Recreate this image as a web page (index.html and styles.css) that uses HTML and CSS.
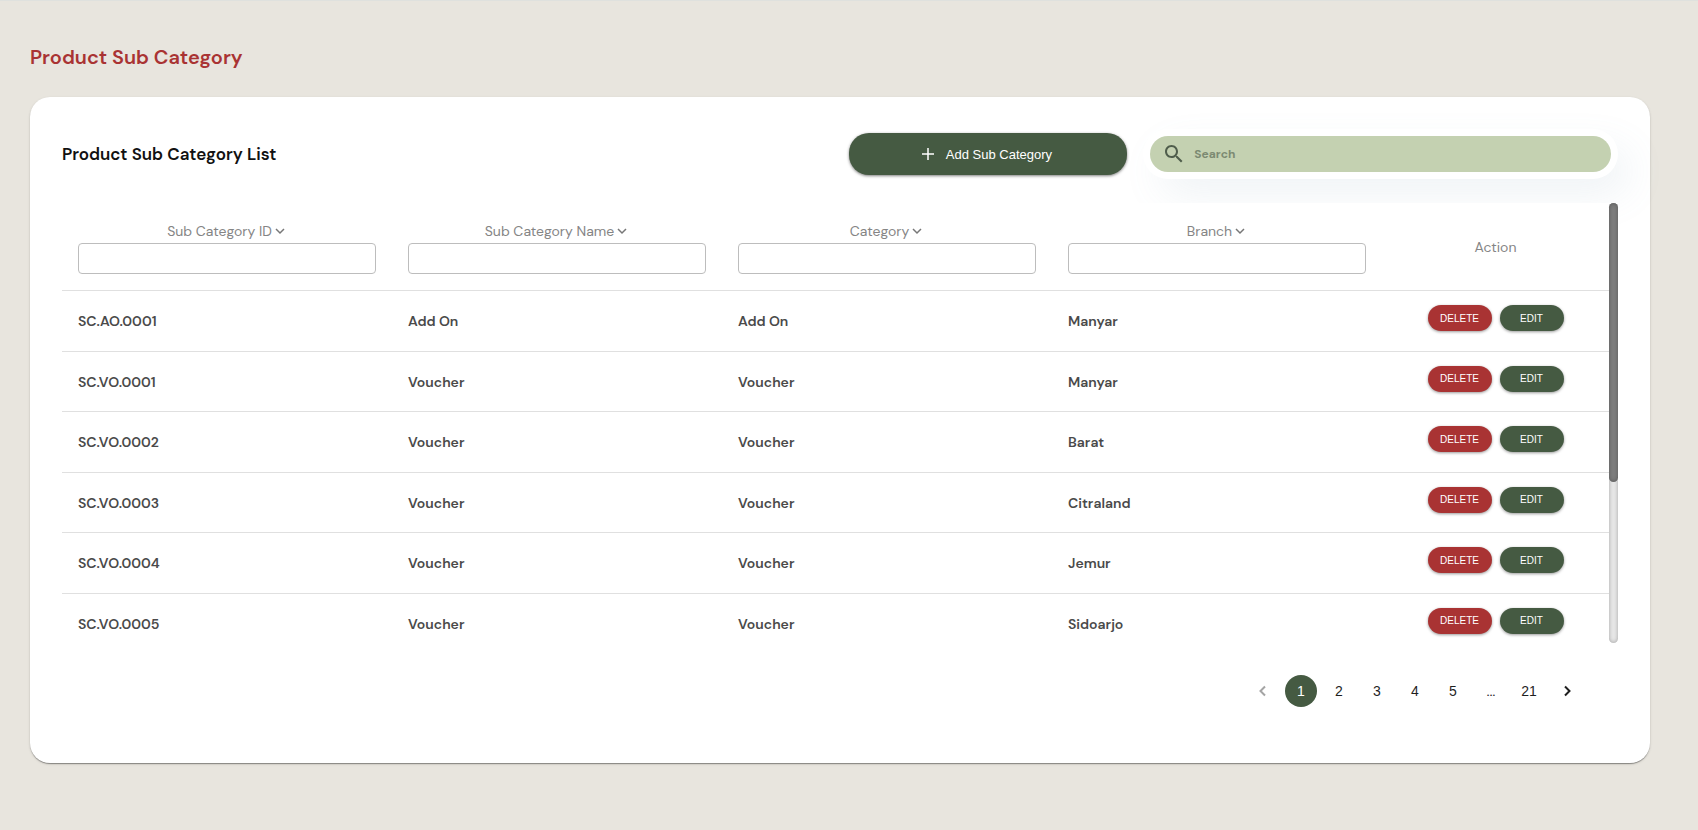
FILE: index.html
```html
<!DOCTYPE html>
<html lang="en">
<head>
    <meta charset="UTF-8">
    <meta name="viewport" content="width=device-width, initial-scale=1.0">
    <title>Product Sub Category</title>
    <link rel="stylesheet" href="styles.css">
</head>
<body>
    <main class="page">
        <h1 class="page-title">Product Sub Category</h1>

        <section class="card">
            <div class="card-header">
                <h2 class="card-title">Product Sub Category List</h2>
                <button type="button" class="btn-add">
                    <svg class="icon-plus" viewBox="0 0 16 16" aria-hidden="true"><path d="M8 2v12M2 8h12" /></svg>
                    Add Sub Category
                </button>
                <label class="search">
                    <svg class="icon-search" viewBox="0 0 24 24" aria-hidden="true"><path d="M15.5 14h-.79l-.28-.27C15.41 12.59 16 11.11 16 9.5 16 5.91 13.09 3 9.5 3S3 5.91 3 9.5 5.91 16 9.5 16c1.61 0 3.09-.59 4.23-1.57l.27.28v.79l5 4.99L20.49 19l-4.99-5zm-6 0C7.01 14 5 11.99 5 9.5S7.01 5 9.5 5 14 7.01 14 9.5 11.99 14 9.5 14z" /></svg>
                    <input type="search" class="search-input" placeholder="Search" aria-label="Search">
                </label>
            </div>

            <div class="table-area">
                <div class="table-scroll">
                    <table class="table">
                        <thead>
                            <tr>
                                <th>
                                    <label for="filterId">Sub Category ID<svg class="icon-sort" viewBox="0 0 14 10" aria-hidden="true"><path d="M3 3l4 4 4-4" /></svg></label>
                                    <input type="text" id="filterId" class="filter">
                                </th>
                                <th>
                                    <label for="filterName">Sub Category Name<svg class="icon-sort" viewBox="0 0 14 10" aria-hidden="true"><path d="M3 3l4 4 4-4" /></svg></label>
                                    <input type="text" id="filterName" class="filter">
                                </th>
                                <th>
                                    <label for="filterCategory">Category<svg class="icon-sort" viewBox="0 0 14 10" aria-hidden="true"><path d="M3 3l4 4 4-4" /></svg></label>
                                    <input type="text" id="filterCategory" class="filter">
                                </th>
                                <th>
                                    <label for="filterBranch">Branch<svg class="icon-sort" viewBox="0 0 14 10" aria-hidden="true"><path d="M3 3l4 4 4-4" /></svg></label>
                                    <input type="text" id="filterBranch" class="filter">
                                </th>
                                <th class="col-action">Action</th>
                            </tr>
                        </thead>
                        <tbody>
                            <tr>
                                <td>SC.AO.0001</td>
                                <td>Add On</td>
                                <td>Add On</td>
                                <td>Manyar</td>
                                <td><div class="actions"><button type="button" class="btn btn-delete">DELETE</button><button type="button" class="btn btn-edit">EDIT</button></div></td>
                            </tr>
                            <tr>
                                <td>SC.VO.0001</td>
                                <td>Voucher</td>
                                <td>Voucher</td>
                                <td>Manyar</td>
                                <td><div class="actions"><button type="button" class="btn btn-delete">DELETE</button><button type="button" class="btn btn-edit">EDIT</button></div></td>
                            </tr>
                            <tr>
                                <td>SC.VO.0002</td>
                                <td>Voucher</td>
                                <td>Voucher</td>
                                <td>Barat</td>
                                <td><div class="actions"><button type="button" class="btn btn-delete">DELETE</button><button type="button" class="btn btn-edit">EDIT</button></div></td>
                            </tr>
                            <tr>
                                <td>SC.VO.0003</td>
                                <td>Voucher</td>
                                <td>Voucher</td>
                                <td>Citraland</td>
                                <td><div class="actions"><button type="button" class="btn btn-delete">DELETE</button><button type="button" class="btn btn-edit">EDIT</button></div></td>
                            </tr>
                            <tr>
                                <td>SC.VO.0004</td>
                                <td>Voucher</td>
                                <td>Voucher</td>
                                <td>Jemur</td>
                                <td><div class="actions"><button type="button" class="btn btn-delete">DELETE</button><button type="button" class="btn btn-edit">EDIT</button></div></td>
                            </tr>
                            <tr>
                                <td>SC.VO.0005</td>
                                <td>Voucher</td>
                                <td>Voucher</td>
                                <td>Sidoarjo</td>
                                <td><div class="actions"><button type="button" class="btn btn-delete">DELETE</button><button type="button" class="btn btn-edit">EDIT</button></div></td>
                            </tr>
                        </tbody>
                    </table>
                </div>
                <div class="scrollbar"><div class="scrollbar-thumb"></div></div>
            </div>

            <nav class="pagination" aria-label="Pagination">
                <button type="button" class="page-btn" aria-label="Previous" disabled><svg class="icon-arrow" viewBox="0 0 18 18" aria-hidden="true"><path d="M11 4.500L6.500 9l4.500 4.500" /></svg></button>
                <button type="button" class="page-btn active">1</button>
                <button type="button" class="page-btn">2</button>
                <button type="button" class="page-btn">3</button>
                <button type="button" class="page-btn">4</button>
                <button type="button" class="page-btn">5</button>
                <span class="page-btn page-dots">…</span>
                <button type="button" class="page-btn">21</button>
                <button type="button" class="page-btn" aria-label="Next"><svg class="icon-arrow" viewBox="0 0 18 18" aria-hidden="true"><path d="M7 4.500L11.500 9 7 13.500" /></svg></button>
            </nav>
        </section>
    </main>
</body>
</html>
```
FILE: styles.css
```css
/* General */
* {
    box-sizing: border-box;
}

body {
    margin: 0;
    min-height: 100vh;
    background-color: #e8e5de;
    border-top: 1px solid #dfe1de;
    font-family: "DM Sans", Inter, sans-serif;
    color: #111;
}

.page {
    padding: 40px 48px 40px 30px;
}

.page-title {
    margin: 0 0 24px;
    font-size: 20px;
    line-height: 32px;
    font-weight: 600;
    color: #a93333;
}

/* Card */
.card {
    padding: 36px 32px 56px;
    background-color: #fff;
    border-radius: 20px;
    box-shadow: 0 2px 1px -1px rgba(0, 0, 0, 0.2), 0 1px 1px rgba(0, 0, 0, 0.2), 0 1px 3px rgba(0, 0, 0, 0.12);
}

.card-header {
    display: flex;
    align-items: center;
    padding-right: 7px;
    margin-bottom: 28px;
}

.card-title {
    flex: 1;
    margin: 0;
    font-size: 17px;
    font-weight: 600;
}

.btn-add {
    display: flex;
    align-items: center;
    justify-content: center;
    gap: 10px;
    width: 18%;
    height: 42px;
    padding: 0 8px 0 4px;
    margin-right: 23px;
    border: none;
    border-radius: 20px;
    background-color: #455a42;
    box-shadow: 0 1px 3px rgba(0, 0, 0, 0.5);
    color: #fff;
    font-family: "Liberation Sans", Arial, sans-serif;
    font-size: 13px;
    cursor: pointer;
}

.icon-plus {
    width: 16px;
    height: 16px;
    stroke: #fff;
    stroke-width: 1.5;
}

/* Search */
.search {
    display: flex;
    align-items: center;
    gap: 6px;
    width: calc(30% - 4px);
    height: 36px;
    padding: 0 12px;
    border-radius: 18px;
    background-color: #c4d1b1;
    box-shadow: 0 0 0 7px #fff, 14px 17px 40px 4px rgba(112, 144, 176, 0.12);
}

.icon-search {
    width: 24px;
    height: 24px;
    fill: #4f5d4b;
}

.search-input {
    flex: 1;
    border: none;
    outline: none;
    background: none;
    font-family: inherit;
    font-size: 12px;
    font-weight: 700;
}

.search-input::placeholder {
    color: #7c8a72;
}

/* Table */
.table-area {
    position: relative;
    display: flex;
    height: 440px;
    background-color: #fff;
}

.table-scroll {
    flex: 1;
    overflow: hidden;
}

.table {
    width: 100%;
    table-layout: fixed;
    border-collapse: separate;
    border-spacing: 0;
}

.table th,
.table td {
    padding: 0 16px;
    border-bottom: 1px solid #e0e0e0;
    text-align: left;
}

.table th {
    height: 88px;
    font-size: 14px;
    line-height: 24px;
    font-weight: 400;
    color: #858585;
    text-align: center;
}

.table th label {
    display: block;
}

.table .col-action {
    width: 227px;
}

.table td {
    height: 60px;
    font-size: 14px;
    font-weight: 600;
    color: #4a4a4a;
}

.table tbody tr:nth-child(odd) td {
    height: 61px;
}

.icon-sort {
    width: 14px;
    height: 10px;
    margin-left: 1px;
    fill: none;
    stroke: #777;
    stroke-width: 1.5;
}

.filter {
    display: block;
    width: 100%;
    height: 31px;
    padding: 0 8px;
    border: 1px solid #bdbdbd;
    border-radius: 4px;
    font-family: inherit;
}

.actions {
    display: flex;
    justify-content: center;
    gap: 8px;
    padding-bottom: 6px;
}

.btn {
    width: 64px;
    height: 26px;
    padding: 0;
    border: none;
    border-radius: 13px;
    box-shadow: 0 1px 3px rgba(0, 0, 0, 0.4);
    color: #fff;
    font-family: "Liberation Sans", Arial, sans-serif;
    font-size: 10px;
    cursor: pointer;
}

.btn-delete {
    background-color: #a93333;
}

.btn-edit {
    background-color: #455a42;
}

.scrollbar {
    width: 9px;
    border-radius: 5px;
    background-color: #e8e8e8;
    box-shadow: inset 0 0 4px rgba(0, 0, 0, 0.3);
}

.scrollbar-thumb {
    height: 279px;
    border-radius: 5px;
    background-color: #7d7d7d;
    box-shadow: inset 0 0 4px rgba(0, 0, 0, 0.3);
}

/* Pagination */
.pagination {
    display: flex;
    justify-content: flex-end;
    gap: 6px;
    margin-top: 32px;
    padding-right: 35px;
}

.page-btn {
    display: flex;
    align-items: center;
    justify-content: center;
    width: 32px;
    height: 32px;
    padding: 0;
    border: none;
    border-radius: 50%;
    background: none;
    color: #1f1f1f;
    font-family: "Liberation Sans", Arial, sans-serif;
    font-size: 14px;
    cursor: pointer;
}

.page-btn.active {
    background-color: #455a42;
    color: #fff;
}

.page-btn:disabled {
    opacity: 0.4;
}

.page-dots {
    font-family: Roboto, sans-serif;
    cursor: default;
}

.icon-arrow {
    width: 18px;
    height: 18px;
    fill: none;
    stroke: #1f1f1f;
    stroke-width: 2;
}
```
